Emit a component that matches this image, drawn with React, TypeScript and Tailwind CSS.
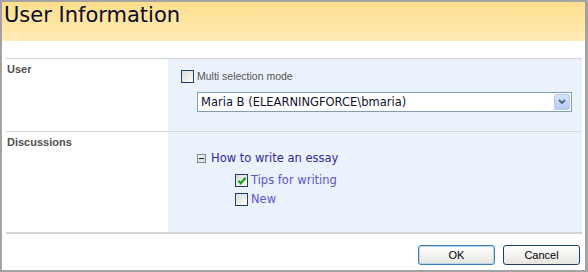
const verdana = { fontFamily: '"DejaVu Sans", Verdana, sans-serif' };
const tahoma = { fontFamily: '"Liberation Sans", Tahoma, Arial, sans-serif' };

function CheckBox({ checked = false }: { checked?: boolean }) {
  return (
    <span className="relative w-[13px] h-[13px] shrink-0 border border-[#1c3f6e] bg-gradient-to-br from-[#dcdcd6] to-[#fbfbf9]">
      {checked && (
        <svg className="absolute left-[1px] top-[1px]" width="10" height="10" viewBox="0 0 10 10">
          <path d="M1.5 4.8 L3.8 7.3 L8.6 1.8" fill="none" stroke="#21a121" strokeWidth="2.2" />
        </svg>
      )}
    </span>
  );
}

function TreeToggle() {
  return (
    <span className="flex items-center justify-center w-[9px] h-[9px] shrink-0 border border-[#7f8c99] bg-gradient-to-br from-[#f4f4f0] to-[#d8d8d0]">
      <span className="w-[5px] h-[1px] bg-[#222]" />
    </span>
  );
}

export default function App() {
  return (
    <div className="w-[588px] h-[272px] bg-white border-t-2 border-l-2 border-b-2 border-r-[3px] border-[#a3a3a3] flex flex-col">
      {/* Header */}
      <div className="h-[39px] shrink-0 bg-gradient-to-b from-[#ffdf8e] to-[#ffebb6] pl-[2px] pt-[1px]">
        <div className="text-[21px] leading-[24px] text-[#0a0a2a]" style={verdana}>
          User Information
        </div>
      </div>
      <div className="h-[17px] shrink-0" />

      <div className="pl-[4px] pr-[3px] flex flex-col">
        {/* User row */}
        <div className="border-t border-[#d6d6d6] grid grid-cols-[162px_1fr] h-[73px]">
          <div className="pl-[1px] pt-[4px] text-[11px] leading-[13px] font-bold text-[#4f4f4f]" style={tahoma}>
            User
          </div>
          <div className="bg-[#ebf2fc] pl-[13px] pt-[11px]">
            <div className="flex items-center gap-[3px] h-[13px]">
              <CheckBox />
              <span className="text-[10.5px] leading-[13px] text-[#555]" style={tahoma}>
                Multi selection mode
              </span>
            </div>
            <div className="ml-[16px] mt-[9px] w-[375px] h-[20px] border border-[#7f9db9] bg-white flex items-center justify-between pl-[3px] pr-[1px]">
              <span className="text-[11.5px] leading-[14px] text-[#101030]" style={verdana}>
                Maria B (ELEARNINGFORCE\bmaria)
              </span>
              <span className="w-[16px] h-[16px] rounded-[2px] border border-[#b8cbf0] bg-gradient-to-b from-[#d7e3fb] to-[#b7c9f0] flex items-center justify-center">
                <svg width="8" height="6" viewBox="0 0 8 6">
                  <path d="M1 1 L4 4 L7 1" fill="none" stroke="#4d6185" strokeWidth="1.8" />
                </svg>
              </span>
            </div>
          </div>
        </div>

        {/* Discussions row */}
        <div className="border-t border-[#d6d6d6] grid grid-cols-[162px_1fr] h-[101px]">
          <div className="pl-[1px] pt-[4px] text-[11px] leading-[13px] font-bold text-[#4f4f4f]" style={tahoma}>
            Discussions
          </div>
          <div className="bg-[#ebf2fc] pl-[29px] pt-[19px]" style={verdana}>
            <div className="flex items-center gap-[5px] h-[15px]">
              <TreeToggle />
              <span className="text-[11.5px] leading-[15px] text-[#2f2a9e]">How to write an essay</span>
            </div>
            <div className="ml-[38px] mt-[8px] flex flex-col gap-[6px]">
              <div className="flex items-center gap-[3px] h-[13px]">
                <CheckBox checked />
                <span className="text-[11.5px] leading-[15px] text-[#5d57c8]">Tips for writing</span>
              </div>
              <div className="flex items-center gap-[3px] h-[13px]">
                <CheckBox />
                <span className="text-[11.5px] leading-[15px] text-[#5d57c8]">New</span>
              </div>
            </div>
          </div>
        </div>

        {/* Footer */}
        <div className="border-t-2 border-[#d6d6d6] h-[38px] flex justify-end items-start gap-[8px] pt-[11px] pr-[2px]">
          <button
            className="w-[77px] h-[20px] rounded-[3px] border border-[#3c7fb1] bg-gradient-to-b from-white to-[#e6e5de] text-[11px] text-black shadow-[inset_0_0_0_1px_#b9d4f0]"
            style={tahoma}
          >
            OK
          </button>
          <button
            className="w-[77px] h-[20px] rounded-[3px] border border-[#1d3f67] bg-gradient-to-b from-white to-[#e6e5de] text-[11px] text-black"
            style={tahoma}
          >
            Cancel
          </button>
        </div>
      </div>
    </div>
  );
}
